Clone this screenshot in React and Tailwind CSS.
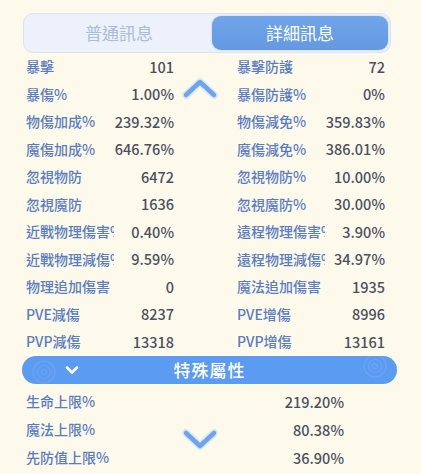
import React from "react";

const rows = [
  ["暴擊", "101", "暴擊防護", "72"],
  ["暴傷%", "1.00%", "暴傷防護%", "0%"],
  ["物傷加成%", "239.32%", "物傷減免%", "359.83%"],
  ["魔傷加成%", "646.76%", "魔傷減免%", "386.01%"],
  ["忽視物防", "6472", "忽視物防%", "10.00%"],
  ["忽視魔防", "1636", "忽視魔防%", "30.00%"],
  ["近戰物理傷害%", "0.40%", "遠程物理傷害%", "3.90%"],
  ["近戰物理減傷%", "9.59%", "遠程物理減傷%", "34.97%"],
  ["物理追加傷害", "0", "魔法追加傷害", "1935"],
  ["PVE減傷", "8237", "PVE增傷", "8996"],
  ["PVP減傷", "13318", "PVP增傷", "13161"],
];

const special = [
  ["生命上限%", "219.20%"],
  ["魔法上限%", "80.38%"],
  ["先防值上限%", "36.90%"],
];

function Cell({ label, value }) {
  return (
    <div className="flex w-[148px] items-center justify-between">
      <span className="w-[88px] overflow-hidden whitespace-nowrap text-[14px] font-medium text-[#5a7cc2]">
        {label}
      </span>
      <span className="whitespace-nowrap text-[14.5px] font-medium text-[#4b4f5f]">{value}</span>
    </div>
  );
}

function Chevron({ up, className }) {
  return (
    <svg className={className} width="40" height="26" viewBox="0 0 40 26" fill="none">
      <path
        d={up ? "M6 20 L20 7 L34 20" : "M6 6 L20 19 L34 6"}
        stroke="#b9d4f7"
        strokeWidth="8"
        strokeLinecap="round"
        strokeLinejoin="round"
        opacity="0.45"
      />
      <path
        d={up ? "M6 20 L20 7 L34 20" : "M6 6 L20 19 L34 6"}
        stroke="#6ea4ee"
        strokeWidth="4.5"
        strokeLinecap="round"
        strokeLinejoin="round"
      />
    </svg>
  );
}

function Swirl({ className }) {
  return (
    <svg className={className} width="40" height="28" viewBox="0 0 40 28" fill="none">
      <circle cx="20" cy="14" r="11" stroke="#ffffff" strokeOpacity="0.1" strokeWidth="1.2" />
      <circle cx="20" cy="14" r="6.5" stroke="#ffffff" strokeOpacity="0.1" strokeWidth="1.2" />
      <circle cx="20" cy="14" r="2.5" stroke="#ffffff" strokeOpacity="0.1" strokeWidth="1.2" />
    </svg>
  );
}

export default function App() {
  return (
    <div className="relative h-[474px] w-[421px] overflow-hidden bg-[#fdfaec] font-['Noto_Sans_CJK_TC','Noto_Sans',sans-serif]">
      {/* Tabs */}
      <div className="ml-[23px] mt-[13px] flex h-[40px] w-[368px] rounded-[10px] border border-[#d9e3f6] bg-[#edf1fb] p-[2px]">
        <div className="flex flex-1 items-center justify-center text-[17px] font-normal text-[#a9bcd9]">
          普通訊息
        </div>
        <div className="flex w-[176px] items-center justify-center rounded-[9px] bg-gradient-to-b from-[#70a5ec] to-[#6499e2] text-[17px] font-normal text-white shadow-[0_0_2px_rgba(80,130,210,0.4)]">
          詳細訊息
        </div>
      </div>

      {/* Stats grid */}
      <div className="relative">
        {rows.map((r, i) => (
          <div key={i} className="flex h-[27.5px] items-center gap-[63px] pl-[26px]">
            <Cell label={r[0]} value={r[1]} />
            <Cell label={r[2]} value={r[3]} />
          </div>
        ))}
        <Chevron up className="absolute left-[180px] top-[22px]" />
      </div>

      {/* Section header */}
      <div className="relative ml-[22px] flex h-[28px] w-[375px] items-center justify-center overflow-hidden rounded-full bg-[#5b9bf1]">
        <svg className="absolute left-[43px] top-[9px]" width="14" height="10" viewBox="0 0 14 10" fill="none">
          <path d="M2 2.5 L7 7.5 L12 2.5" stroke="#ffffff" strokeWidth="2.6" strokeLinecap="round" strokeLinejoin="round" />
        </svg>
        <Swirl className="absolute left-[2px] top-[2px]" />
        <Swirl className="absolute right-[2px] top-[-4px]" />
        <span className="text-[17px] font-medium tracking-[1px] text-white">特殊屬性</span>
      </div>

      {/* Special rows */}
      <div className="relative mt-[4px]">
        {special.map((r, i) => (
          <div key={i} className="flex h-[28px] w-[344px] items-center justify-between pl-[26px]">
            <span className="text-[14px] font-medium text-[#5a7cc2]">{r[0]}</span>
            <span className="text-[14.5px] font-medium text-[#4b4f5f]">{r[1]}</span>
          </div>
        ))}
        <Chevron className="absolute left-[180px] top-[39px]" />
      </div>
    </div>
  );
}
